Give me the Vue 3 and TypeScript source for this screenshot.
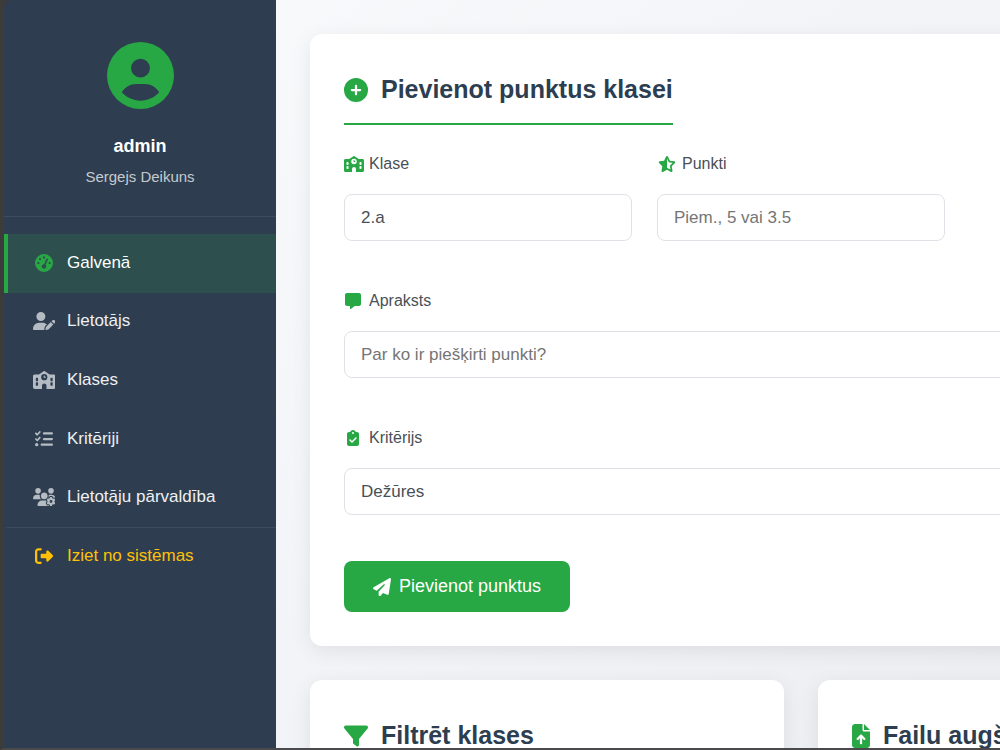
<script setup lang="ts">
import { ref } from 'vue'

interface Icon {
  w: number
  d: string
}

const icons: Record<string, Icon> = {
  user: { w: 512, d: 'M399 384.2C376.9 345.8 335.4 320 288 320H224c-47.4 0-88.9 25.8-111 64.2c35.2 39.2 86.2 63.8 143 63.8s107.8-24.7 143-63.8zM0 256a256 256 0 1 1 512 0A256 256 0 1 1 0 256zm256 16a72 72 0 1 0 0-144 72 72 0 1 0 0 144z' },
  plus: { w: 512, d: 'M256 512A256 256 0 1 0 256 0a256 256 0 1 0 0 512zM232 344V280H168c-13.3 0-24-10.7-24-24s10.7-24 24-24h64V168c0-13.3 10.7-24 24-24s24 10.7 24 24v64h64c13.3 0 24 10.7 24 24s-10.7 24-24 24H280v64c0 13.3-10.7 24-24 24s-24-10.7-24-24z' },
  gauge: { w: 512, d: 'M0 256a256 256 0 1 1 512 0A256 256 0 1 1 0 256zM288 96a32 32 0 1 0 -64 0 32 32 0 1 0 64 0zM256 416c35.3 0 64-28.7 64-64c0-17.4-6.9-33.1-18.1-44.6L366 161.7c5.3-12.1-.2-26.3-12.3-31.6s-26.3 .2-31.6 12.3L257.9 288c-.6 0-1.3 0-1.9 0c-35.3 0-64 28.7-64 64s28.7 64 64 64zM176 144a32 32 0 1 0 -64 0 32 32 0 1 0 64 0zM96 288a32 32 0 1 0 0-64 32 32 0 1 0 0 64zm352-32a32 32 0 1 0 -64 0 32 32 0 1 0 64 0z' },
  userPen: { w: 640, d: 'M224 256A128 128 0 1 0 224 0a128 128 0 1 0 0 256zm-45.7 48C79.8 304 0 383.8 0 482.3C0 498.7 13.3 512 29.7 512H322.8c-3.1-8.8-3.7-18.4-1.4-27.8l15-60.1c2.8-11.3 8.6-21.5 16.8-29.7l40.3-40.3c-32.1-31-75.7-50.1-123.9-50.1H178.3zm435.5-68.3c-15.6-15.6-40.9-15.6-56.6 0l-29.4 29.4 71 71 29.4-29.4c15.6-15.6 15.6-40.9 0-56.6l-14.4-14.4zM375.9 417c-4.1 4.1-7 9.2-8.4 14.9l-15 60.1c-1.4 5.5 .2 11.2 4.2 15.2s9.7 5.6 15.2 4.2l60.1-15c5.6-1.4 10.8-4.3 14.9-8.4L576.1 358.7l-71-71L375.9 417z' },
  school: { w: 640, d: 'M337.8 5.4C327-1.8 313-1.8 302.2 5.4L166.3 96H48C21.5 96 0 117.5 0 144V464c0 26.5 21.5 48 48 48H256V416c0-35.3 28.7-64 64-64s64 28.7 64 64v96H592c26.5 0 48-21.5 48-48V144c0-26.5-21.5-48-48-48H473.7L337.8 5.4zM96 192h32c8.8 0 16 7.2 16 16v64c0 8.8-7.2 16-16 16H96c-8.8 0-16-7.2-16-16V208c0-8.8 7.2-16 16-16zm400 16c0-8.8 7.2-16 16-16h32c8.8 0 16 7.2 16 16v64c0 8.8-7.2 16-16 16H512c-8.8 0-16-7.2-16-16V208zM96 320h32c8.8 0 16 7.2 16 16v64c0 8.8-7.2 16-16 16H96c-8.8 0-16-7.2-16-16V336c0-8.8 7.2-16 16-16zm400 16c0-8.8 7.2-16 16-16h32c8.8 0 16 7.2 16 16v64c0 8.8-7.2 16-16 16H512c-8.8 0-16-7.2-16-16V336zM232 176a88 88 0 1 1 176 0 88 88 0 1 1 -176 0zm88-48c-8.8 0-16 7.2-16 16v32c0 8.8 7.2 16 16 16h32c8.8 0 16-7.2 16-16s-7.2-16-16-16H336V144c0-8.8-7.2-16-16-16z' },
  list: { w: 512, d: 'M152.1 38.2c9.9 8.9 10.7 24 1.8 33.9l-72 80c-4.4 4.9-10.6 7.8-17.2 7.9s-12.9-2.4-17.6-7L7 113C-2.3 103.6-2.3 88.4 7 79s24.6-9.4 33.9 0l22.1 22.1 55.1-61.2c8.9-9.9 24-10.7 33.9-1.8zm0 160c9.9 8.9 10.7 24 1.8 33.9l-72 80c-4.4 4.9-10.6 7.8-17.2 7.9s-12.9-2.4-17.6-7L7 273c-9.4-9.4-9.4-24.6 0-33.9s24.6-9.4 33.9 0l22.1 22.1 55.1-61.2c8.9-9.9 24-10.7 33.9-1.8zM224 96c0-17.7 14.3-32 32-32H480c17.7 0 32 14.3 32 32s-14.3 32-32 32H256c-17.7 0-32-14.3-32-32zm0 160c0-17.7 14.3-32 32-32H480c17.7 0 32 14.3 32 32s-14.3 32-32 32H256c-17.7 0-32-14.3-32-32zM160 416c0-17.7 14.3-32 32-32H480c17.7 0 32 14.3 32 32s-14.3 32-32 32H192c-17.7 0-32-14.3-32-32zM48 368a48 48 0 1 1 0 96 48 48 0 1 1 0-96z' },
  usersGear: { w: 640, d: 'M144 160A80 80 0 1 0 144 0a80 80 0 1 0 0 160zm368 0A80 80 0 1 0 512 0a80 80 0 1 0 0 160zM0 298.7C0 310.4 9.6 320 21.3 320H234.7c.2 0 .4 0 .7 0c-26.6-23.5-43.3-57.8-43.3-96c0-7.6 .7-15 1.9-22.3c-13.6-6.3-28.7-9.7-44.6-9.7H106.7C47.8 192 0 239.8 0 298.7zM320 320c24 0 45.9-8.8 62.7-23.3c2.5-3.7 5.2-7.3 8-10.7c2.7-3.3 5.7-6.1 9-8.3C410 262.3 416 243.9 416 224c0-53-43-96-96-96s-96 43-96 96s43 96 96 96zm65.4 60.2c-10.3-5.9-18.1-16.2-20.8-28.2H261.3C187.7 352 128 411.7 128 485.3c0 14.7 11.9 26.7 26.7 26.7H455.2c-2.1-5.2-3.2-10.9-3.2-16.4v-3c-1.3-.7-2.7-1.5-4-2.3l-2.6 1.5c-16.8 9.7-40.5 8-54.7-9.7c-4.5-5.6-8.6-11.5-12.4-17.6l-.1-.2-.1-.2-2.4-4.1-.1-.2-.1-.2c-3.4-6.2-6.4-12.6-9-19.3c-8.2-21.2 2.2-42.6 19-52.3l2.7-1.5c0-.8 0-1.5 0-2.3s0-1.5 0-2.3l-2.7-1.5zM533.3 192H490.7c-15.9 0-31 3.5-44.6 9.7c1.3 7.2 1.9 14.7 1.9 22.3c0 17.4-3.5 33.9-9.7 49c2.5 .9 4.9 2 7.1 3.3l2.6 1.5c1.3-.8 2.6-1.6 4-2.3v-3c0-19.4 13.3-39.1 35.8-42.6c7.9-1.2 16-1.9 24.2-1.9s16.3 .6 24.2 1.9c22.5 3.5 35.8 23.2 35.8 42.6v3c1.3 .7 2.7 1.5 4 2.3l2.6-1.5c16.8-9.7 40.5-8 54.7 9.7c2.3 2.8 4.5 5.8 6.6 8.7c-2.1-57.1-49-102.7-106.6-102.7zm91.3 163.9c6.3-3.6 9.5-11.1 6.8-18c-2.1-5.5-4.6-10.8-7.4-15.9l-2.3-4c-3.1-5.1-6.5-9.9-10.2-14.5c-4.6-5.7-12.7-6.7-19-3l-2.9 1.7c-9.2 5.3-20.4 4-29.6-1.3s-16.1-14.5-16.1-25.1v-3.4c0-7.3-4.9-13.8-12.1-14.9c-6.5-1-13.1-1.5-19.9-1.5s-13.4 .5-19.9 1.5c-7.2 1.1-12.1 7.6-12.1 14.9v3.4c0 10.6-6.9 19.8-16.1 25.1s-20.4 6.6-29.6 1.3l-2.9-1.7c-6.3-3.6-14.4-2.6-19 3c-3.7 4.6-7.1 9.5-10.2 14.6l-2.3 3.9c-2.8 5.1-5.3 10.4-7.4 15.9c-2.6 6.8 .5 14.3 6.8 17.9l2.9 1.7c9.2 5.3 13.7 15.8 13.7 26.4s-4.5 21.1-13.7 26.4l-3 1.7c-6.3 3.6-9.5 11.1-6.8 17.9c2.1 5.5 4.6 10.7 7.4 15.8l2.4 4.1c3 5.1 6.4 9.9 10.1 14.5c4.6 5.7 12.7 6.7 19 3l2.9-1.7c9.2-5.3 20.4-4 29.6 1.3s16.1 14.5 16.1 25.1v3.4c0 7.3 4.9 13.8 12.1 14.9c6.5 1 13.1 1.5 19.9 1.5s13.4-.5 19.9-1.5c7.2-1.1 12.1-7.6 12.1-14.9v-3.4c0-10.6 6.9-19.8 16.1-25.1s20.4-6.6 29.6-1.3l2.9 1.7c6.3 3.6 14.4 2.6 19-3c3.7-4.6 7.1-9.4 10.1-14.5l2.4-4.2c2.8-5.1 5.3-10.3 7.4-15.8c2.6-6.8-.5-14.3-6.8-17.9l-3-1.7c-9.2-5.3-13.7-15.8-13.7-26.4s4.5-21.1 13.7-26.4l3-1.7zM472 384a40 40 0 1 1 80 0 40 40 0 1 1 -80 0z' },
  exit: { w: 512, d: 'M377.9 105.9L500.7 228.7c7.2 7.2 11.3 17.1 11.3 27.3s-4.1 20.1-11.3 27.3L377.9 406.1c-6.4 6.4-15 9.9-24 9.9c-18.7 0-33.9-15.2-33.9-33.9l0-62.1-128 0c-17.7 0-32-14.3-32-32l0-64c0-17.7 14.3-32 32-32l128 0 0-62.1c0-18.7 15.2-33.9 33.9-33.9c9 0 17.6 3.6 24 9.9zM160 96L96 96c-17.7 0-32 14.3-32 32l0 256c0 17.7 14.3 32 32 32l64 0c17.7 0 32 14.3 32 32s-14.3 32-32 32l-64 0c-53 0-96-43-96-96L0 128C0 75 43 32 96 32l64 0c17.7 0 32 14.3 32 32s-14.3 32-32 32z' },
  star: { w: 640, d: 'M320 376.4l.1-.1 26.4 14.1 85.2 45.5-16.5-97.6-4.8-28.7 20.7-20.5 70.1-69.3-96.1-14.2-29.3-4.3-12.9-26.6L320.1 86.9l-.1 .3V376.4zm175.1 98.3c2 12-3 24.2-12.9 31.3s-23 8-33.8 2.3L320.1 439.8 191.8 508.3C181 514 167.9 513.1 158 506s-14.9-19.3-12.9-31.3L169.8 329 65.6 225.9c-8.6-8.5-11.7-21.2-7.9-32.7s13.7-19.9 25.7-21.7L227 150.3 291.4 18c5.4-11 16.5-18 28.8-18s23.4 7 28.8 18l64.3 132.3 143.6 21.2c12 1.8 22 10.2 25.7 21.7s.7 24.2-7.9 32.7L470.5 329l24.6 145.7z' },
  message: { w: 512, d: 'M64 0C28.7 0 0 28.7 0 64V352c0 35.3 28.7 64 64 64h96v80c0 6.1 3.4 11.6 8.8 14.3s11.9 2.1 16.8-1.5L309.3 416H448c35.3 0 64-28.7 64-64V64c0-35.3-28.7-64-64-64H64z' },
  clipboard: { w: 384, d: 'M192 0c-41.8 0-77.4 26.7-90.5 64H64C28.7 64 0 92.7 0 128V448c0 35.3 28.7 64 64 64H320c35.3 0 64-28.7 64-64V128c0-35.3-28.7-64-64-64H282.5C269.4 26.7 233.8 0 192 0zm0 64a32 32 0 1 1 0 64 32 32 0 1 1 0-64zM305 273L177 401c-9.4 9.4-24.6 9.4-33.9 0L79 337c-9.4-9.4-9.4-24.6 0-33.9s24.6-9.4 33.9 0l47 47L271 239c9.4-9.4 24.6-9.4 33.9 0s9.4 24.6 0 33.9z' },
  plane: { w: 512, d: 'M498.1 5.6c10.1 7 15.4 19.1 13.5 31.2l-64 416c-1.5 9.7-7.4 18.2-16 23s-18.9 5.4-28 1.6L284 427.7l-68.5 74.1c-8.9 9.7-22.9 12.9-35.2 8.1S160 493.2 160 480V396.4c0-4 1.5-7.8 4.2-10.7L331.8 202.8c5.8-6.3 5.6-16-.4-22s-15.7-6.4-22-.7L106 360.8 17.7 316.6C7.1 311.3 .3 300.7 0 288.9s5.9-22.8 16.1-28.7l448-256c10.7-6.1 23.9-5.5 34 1.4z' },
  filter: { w: 512, d: 'M3.9 54.9C10.5 40.9 24.5 32 40 32H472c15.5 0 29.5 8.9 36.1 22.9s4.6 30.5-5.2 42.5L320 320.9V448c0 12.1-6.8 23.2-17.7 28.6s-23.8 4.3-33.5-3l-64-48c-8.1-6-12.8-15.5-12.8-25.6V320.9L9 97.3C-.7 85.4-2.8 68.8 3.9 54.9z' },
  fileUp: { w: 384, d: 'M64 0C28.7 0 0 28.7 0 64V448c0 35.3 28.7 64 64 64H320c35.3 0 64-28.7 64-64V160H256c-17.7 0-32-14.3-32-32V0H64zM256 0V128H384L256 0zM216 408c0 13.3-10.7 24-24 24s-24-10.7-24-24V305.9l-31 31c-9.4 9.4-24.6 9.4-33.9 0s-9.4-24.6 0-33.9l72-72c9.4-9.4 24.6-9.4 33.9 0l72 72c9.4 9.4 9.4 24.6 0 33.9s-24.6 9.4-33.9 0l-31-31V408z' },
}

const box = (name: string): string => `0 0 ${icons[name].w} 512`

const nav = [
  { label: 'Galvenā', icon: 'gauge', active: true },
  { label: 'Lietotājs', icon: 'userPen', active: false },
  { label: 'Klases', icon: 'school', active: false },
  { label: 'Kritēriji', icon: 'list', active: false },
  { label: 'Lietotāju pārvaldība', icon: 'usersGear', active: false },
]

const klase = ref('2.a')
const punkti = ref('')
const apraksts = ref('')
const kriterijs = ref('Dežūres')
</script>

<template>
  <div class="shell">
    <aside class="sidebar">
      <div class="profile">
        <svg class="avatar" :viewBox="box('user')" aria-hidden="true"><path :d="icons.user.d" /></svg>
        <strong class="name">admin</strong>
        <span class="full-name">Sergejs Deikuns</span>
      </div>
      <nav>
        <ul class="menu">
          <li v-for="item in nav" :key="item.label">
            <a href="#" class="link" :class="{ active: item.active }">
              <span class="link-icon"><svg :viewBox="box(item.icon)" aria-hidden="true"><path :d="icons[item.icon].d" /></svg></span>
              {{ item.label }}
            </a>
          </li>
        </ul>
        <a href="#" class="link logout">
          <span class="link-icon"><svg :viewBox="box('exit')" aria-hidden="true"><path :d="icons.exit.d" /></svg></span>
          Iziet no sistēmas
        </a>
      </nav>
    </aside>

    <main class="content">
      <section class="card">
        <h2 class="title">
          <svg :viewBox="box('plus')" aria-hidden="true"><path :d="icons.plus.d" /></svg>
          Pievienot punktus klasei
        </h2>
        <form class="form" @submit.prevent>
          <div class="field">
            <label for="klase"><span class="label-icon"><svg :viewBox="box('school')" aria-hidden="true"><path :d="icons.school.d" /></svg></span>Klase</label>
            <select id="klase" v-model="klase"><option>2.a</option></select>
          </div>
          <div class="field">
            <label for="punkti"><span class="label-icon"><svg :viewBox="box('star')" aria-hidden="true"><path :d="icons.star.d" /></svg></span>Punkti</label>
            <input id="punkti" v-model="punkti" type="text" placeholder="Piem., 5 vai 3.5" />
          </div>
          <div class="field wide">
            <label for="apraksts"><span class="label-icon"><svg :viewBox="box('message')" aria-hidden="true"><path :d="icons.message.d" /></svg></span>Apraksts</label>
            <input id="apraksts" v-model="apraksts" type="text" placeholder="Par ko ir piešķirti punkti?" />
          </div>
          <div class="field wide">
            <label for="kriterijs"><span class="label-icon"><svg :viewBox="box('clipboard')" aria-hidden="true"><path :d="icons.clipboard.d" /></svg></span>Kritērijs</label>
            <select id="kriterijs" v-model="kriterijs"><option>Dežūres</option></select>
          </div>
          <button type="submit" class="submit">
            <svg :viewBox="box('plane')" aria-hidden="true"><path :d="icons.plane.d" /></svg>
            Pievienot punktus
          </button>
        </form>
      </section>

      <div class="pair">
        <section class="card">
          <h2 class="title">
            <svg :viewBox="box('filter')" aria-hidden="true"><path :d="icons.filter.d" /></svg>
            Filtrēt klases
          </h2>
        </section>
        <section class="card">
          <h2 class="title">
            <svg :viewBox="box('fileUp')" aria-hidden="true"><path :d="icons.fileUp.d" /></svg>
            Failu augšupielāde
          </h2>
        </section>
      </div>
    </main>
  </div>
</template>

<style>
body {
  margin: 0;
  background: #3b3b3b;
}
</style>

<style scoped>
* {
  box-sizing: border-box;
}

svg {
  display: block;
  flex: none;
  fill: currentColor;
}

.shell {
  display: flex;
  height: 100vh;
  overflow: hidden;
  border-left: 4px solid #3c3c3b;
  border-bottom: 2px solid #4a4a4d;
  font-family: "Liberation Sans", Arial, sans-serif;
  font-size: 17px;
  color: #495057;
}

.sidebar {
  flex: 0 0 272px;
  background: #2e3e50;
  border-top-left-radius: 8px;
}

.profile {
  display: flex;
  flex-direction: column;
  align-items: center;
  height: 217px;
  padding-top: 42px;
  border-bottom: 1px solid #3d4d5f;
}

.avatar {
  width: 67px;
  height: 67px;
  color: #28a745;
}

.name {
  margin-top: 22px;
  font-size: 18px;
  line-height: 30px;
  color: #fff;
}

.full-name {
  margin-top: 4px;
  font-size: 15px;
  line-height: 24px;
  color: #c5cace;
}

.menu {
  display: grid;
  grid-auto-rows: 1fr;
  height: 293px;
  margin: 17px 0 0;
  padding: 0;
  list-style: none;
}

.link {
  display: flex;
  align-items: center;
  gap: 12px;
  height: 100%;
  padding-left: 25px;
  padding-bottom: 1px;
  border-left: 4px solid transparent;
  color: #eef0f2;
  text-decoration: none;
}

.link-icon {
  display: flex;
  flex: none;
  width: 22px;
  justify-content: center;
  color: #b5bbc2;
}

.link-icon svg {
  height: 18px;
}

.link.active {
  background: #2d504e;
  border-left-color: #28a745;
  color: #fff;
}

.link.active .link-icon {
  color: #28a745;
}

.logout {
  height: 58px;
  border-top: 1px solid #3d4d5f;
  color: #ffc107;
}

.logout .link-icon {
  color: #ffc107;
}

.content {
  flex: 1 0 auto;
  min-width: 1050px;
  padding: 34px;
  background: linear-gradient(135deg, #f8f9fb 0%, #e9ebef 100%);
}

.card {
  padding: 34px;
  border-radius: 12px;
  background: #fff;
  box-shadow: 0 5px 20px rgba(0, 0, 0, 0.08);
}

.title {
  display: inline-flex;
  align-items: center;
  gap: 13px;
  margin: 0 0 25px;
  padding-bottom: 12px;
  border-bottom: 2px solid #28a745;
  font-size: 25px;
  line-height: 43px;
  color: #2c3e50;
  white-space: nowrap;
}

.title svg {
  height: 24px;
  color: #28a745;
}

.form {
  display: grid;
  grid-template-columns: repeat(3, 1fr);
  gap: 46px 25px;
}

.field {
  display: flex;
  flex-direction: column;
  gap: 16px;
}

.wide {
  grid-column: 1 / -1;
}

label {
  display: flex;
  align-items: center;
  gap: 8px;
  font-size: 16px;
  line-height: 28px;
}

.label-icon {
  display: flex;
  flex: none;
  width: 17px;
  justify-content: safe center;
  color: #28a745;
}

.label-icon svg {
  height: 16px;
}

input,
select {
  width: 100%;
  height: 47px;
  padding: 0 16px;
  border: 1px solid #dee2e6;
  border-radius: 8px;
  background: #fff;
  color: #495057;
  font: inherit;
  appearance: none;
}

input::placeholder {
  color: #757575;
}

.submit {
  display: flex;
  align-items: center;
  justify-self: start;
  gap: 8px;
  height: 51px;
  padding: 0 29px;
  border: 0;
  border-radius: 8px;
  background: #28a745;
  color: #fff;
  font: inherit;
  font-size: 18px;
}

.submit svg {
  height: 18px;
}

.pair {
  display: grid;
  grid-template-columns: 1fr 1fr;
  gap: 34px;
  margin-top: 34px;
}
</style>
